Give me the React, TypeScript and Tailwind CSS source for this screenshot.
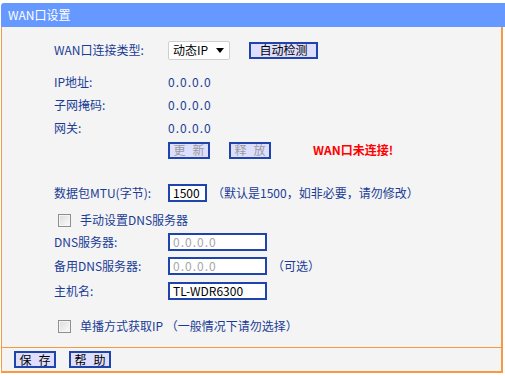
import React from 'react';

const font = { fontFamily: '"Noto Sans CJK SC", "Noto Sans", sans-serif' };

function Row({ label, children, mt }: { label?: string; children?: React.ReactNode; mt: string }) {
    return (
        <div className={`flex h-[22px] items-center pl-[52px] ${mt}`}>
            <div className="w-[114px] shrink-0">{label}</div>
            {children}
        </div>
    );
}

function Checkbox() {
    return (
        <span className="box-border inline-block h-[13px] w-[13px] border border-[#8e8f8f] bg-gradient-to-br from-[#dcdcdc] to-[#fbfbfb] shadow-[inset_0_0_0_1px_#f4f4f4]" />
    );
}

function Btn({ children, w, disabled, spaced }: { children: React.ReactNode; w: string; disabled?: boolean; spaced?: boolean }) {
    return (
        <div
            className={`box-border flex h-[17px] ${w} items-center justify-center border-2 border-[#1f45ad] bg-[#dedeff] text-[12px] leading-none ${disabled ? 'text-[#9a9a9a]' : 'text-black'}`}
        >
            <span className={spaced ? 'mr-[-7px] tracking-[7px]' : ''}>{children}</span>
        </div>
    );
}

function Field({ w, value, gray }: { w: string; value: string; gray?: boolean }) {
    return (
        <div
            className={`box-border flex h-[18px] ${w} items-center border-2 border-[#1f45ad] bg-white pl-[3px] text-[12px] ${gray ? 'text-[#a6a6a6] tracking-[1px]' : 'text-black'}`}
        >
            {value}
        </div>
    );
}

export default function App() {
    return (
        <div className="h-[376px] w-[505px] overflow-hidden bg-white pt-[3px] text-[12px] text-[#1a3c96]" style={font}>
            <div className="ml-[1px] flex h-[24px] w-[504px] items-center rounded-tl-[3px] bg-[#6699ff] pl-[7px] text-[12px] text-white">
                WAN口设置
            </div>
            <div className="ml-[1px] box-border w-[502px] border-b-2 border-l border-r-2 border-[#f79a3e] bg-[#f4f4f4]">
                <div className="pt-[12px]">
                    <Row label="WAN口连接类型:" mt="">
                        <div className="box-border flex h-[19px] w-[62px] items-center justify-between rounded-[2px] border border-[#cfcfcf] bg-white pl-[4px] pr-[5px] text-black">
                            <span>动态IP</span>
                            <svg width="8" height="5" viewBox="0 0 8 5">
                                <path d="M0 0h8L4 5z" fill="#000" />
                            </svg>
                        </div>
                        <div className="ml-[19px]">
                            <Btn w="w-[69px]">自动检测</Btn>
                        </div>
                    </Row>
                    <Row label="IP地址:" mt="mt-[10px]">
                        <span className="tracking-[1px]">0.0.0.0</span>
                    </Row>
                    <Row label="子网掩码:" mt="mt-[1px]">
                        <span className="tracking-[1px]">0.0.0.0</span>
                    </Row>
                    <Row label="网关:" mt="mt-[1px]">
                        <span className="tracking-[1px]">0.0.0.0</span>
                    </Row>
                    <Row mt="">
                        <Btn w="w-[42px]" disabled spaced>
                            更新
                        </Btn>
                        <div className="ml-[19px]">
                            <Btn w="w-[42px]" disabled spaced>
                                释放
                            </Btn>
                        </div>
                        <span className="ml-[42px] font-bold text-[#ff0000]">WAN口未连接!</span>
                    </Row>
                    <Row label="数据包MTU(字节):" mt="mt-[21px]">
                        <Field w="w-[39px]" value="1500" />
                        <span className="ml-[5px]">（默认是1500，如非必要，请勿修改）</span>
                    </Row>
                    <div className="mt-[5px] flex h-[22px] items-center pl-[56px]">
                        <Checkbox />
                        <span className="ml-[9px]">手动设置DNS服务器</span>
                    </div>
                    <Row label="DNS服务器:" mt="">
                        <Field w="w-[99px]" value="0.0.0.0" gray />
                    </Row>
                    <Row label="备用DNS服务器:" mt="mt-[2px]">
                        <Field w="w-[99px]" value="0.0.0.0" gray />
                        <span className="ml-[5px]">（可选）</span>
                    </Row>
                    <Row label="主机名:" mt="mt-[3px]">
                        <Field w="w-[99px]" value="TL-WDR6300" />
                    </Row>
                    <div className="mt-[13px] flex h-[22px] items-center pl-[56px]">
                        <Checkbox />
                        <span className="ml-[9px] whitespace-pre">单播方式获取IP （一般情况下请勿选择）</span>
                    </div>
                    <div className="h-[10px]" />
                </div>
                <div className="flex h-[24px] gap-[13px] border-t border-[#f79a3e] pl-[12px] pt-[3px]">
                    <Btn w="w-[42px]" spaced>保存</Btn>
                    <Btn w="w-[42px]" spaced>帮助</Btn>
                </div>
            </div>
        </div>
    );
}
